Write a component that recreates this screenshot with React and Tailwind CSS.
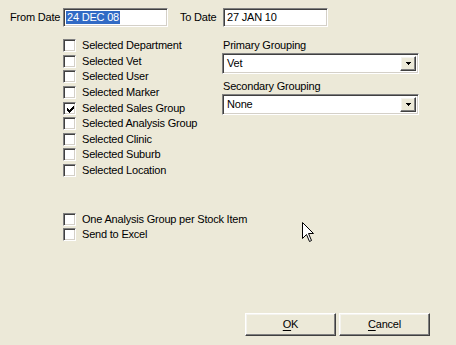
import React from "react";

const sunken =
  "border border-t-[#808080] border-l-[#808080] border-b-white border-r-white shadow-[inset_1px_1px_0_#404040,inset_-1px_-1px_0_#d4d0c8]";
const raised =
  "border border-t-white border-l-white border-b-[#404040] border-r-[#404040] shadow-[inset_-1px_-1px_0_#808080,inset_1px_1px_0_#f4f3ee]";

function Check() {
  // classic 7x7 tick, drawn pixel by pixel
  const rows = ["......X", ".....XX", "X...XXX", "XX.XXX.", "XXXXX..", ".XXX...", "..X...."];
  let d = "";
  rows.forEach((r, y) =>
    r.split("").forEach((c, x) => {
      if (c === "X") d += `M${x} ${y}h1v1h-1z`;
    })
  );
  return (
    <svg width="7" height="7" viewBox="0 0 7 7" className="absolute left-[3px] top-[3px]">
      <path d={d} fill="#000" />
    </svg>
  );
}

function CheckRow({ label, checked }) {
  return (
    <div className="flex items-center h-[15.6px]">
      <div className={`relative w-[13px] h-[13px] bg-white ${sunken}`}>
        {checked && <Check />}
      </div>
      <span className="ml-[6px] leading-none">{label}</span>
    </div>
  );
}

function Combo({ value }) {
  return (
    <div className={`flex items-stretch w-[197px] h-[21px] bg-white ${sunken} p-[2px]`}>
      <span className="flex-1 flex items-center pl-[2px] leading-none">{value}</span>
      <div className={`w-[16px] bg-[#ece9d8] flex items-center justify-center ${raised}`}>
        <svg width="5" height="3" viewBox="0 0 5 3">
          <path d="M0 0h5v1h-1v1h-1v1h-1v-1h-1v-1h-1z" fill="#000" />
        </svg>
      </div>
    </div>
  );
}

function Button({ first, rest }) {
  return (
    <button className={`w-[91px] h-[23px] bg-[#ece9d8] ${raised} flex items-center justify-center leading-none`}>
      <span className="underline underline-offset-2">{first}</span>
      {rest}
    </button>
  );
}

export default function App() {
  const options = [
    ["Selected Department", false],
    ["Selected Vet", false],
    ["Selected User", false],
    ["Selected Marker", false],
    ["Selected Sales Group", true],
    ["Selected Analysis Group", false],
    ["Selected Clinic", false],
    ["Selected Suburb", false],
    ["Selected Location", false],
  ];

  return (
    <div className="relative w-[456px] h-[345px] bg-[#ece9d8] text-black text-[11px] tracking-[-0.2px] flex flex-col font-['Liberation_Sans',Arial,sans-serif]">
      {/* date range */}
      <div className="flex items-center pt-[8px] pl-[10px]">
        <span className="w-[53px]">From Date</span>
        <div className={`w-[105px] h-[19px] bg-white ${sunken} flex items-center pl-[2px]`}>
          <span className="bg-[#316ac5] text-white leading-[13px] px-[1px]">24 DEC 08</span>
        </div>
        <span className="ml-[12px] w-[43px]">To Date</span>
        <div className={`w-[105px] h-[19px] bg-white ${sunken} flex items-center pl-[3px]`}>
          27 JAN 10
        </div>
      </div>

      <div className="flex mt-[11px]">
        <div className="flex flex-col pl-[63px] w-[222px]">
          {options.map(([label, checked]) => (
            <CheckRow key={label} label={label} checked={checked} />
          ))}
        </div>
        <div className="flex flex-col">
          <div className="h-[15px] flex items-center pl-[1px]">Primary Grouping</div>
          <Combo value="Vet" />
          <div className="h-[15px] mt-[5px] flex items-center pl-[1px]">Secondary Grouping</div>
          <Combo value="None" />
        </div>
      </div>

      <div className="flex flex-col pl-[63px] mt-[33px]">
        <CheckRow label="One Analysis Group per Stock Item" />
        <CheckRow label="Send to Excel" />
      </div>

      <div className="mt-auto flex justify-end gap-[3px] pr-[26px] pb-[9px]">
        <Button first="O" rest="K" />
        <Button first="C" rest="ancel" />
      </div>

      {/* mouse pointer */}
      <svg width="13" height="21" viewBox="0 0 13 21" className="absolute left-[302px] top-[222px]">
        <path
          d="M0.5 0.5V16.5L4.5 12.5L7.5 19.5L9.5 18.5L6.5 11.5H11.5Z"
          fill="#fff"
          stroke="#000"
          strokeWidth="1"
          strokeLinejoin="miter"
        />
      </svg>
    </div>
  );
}
